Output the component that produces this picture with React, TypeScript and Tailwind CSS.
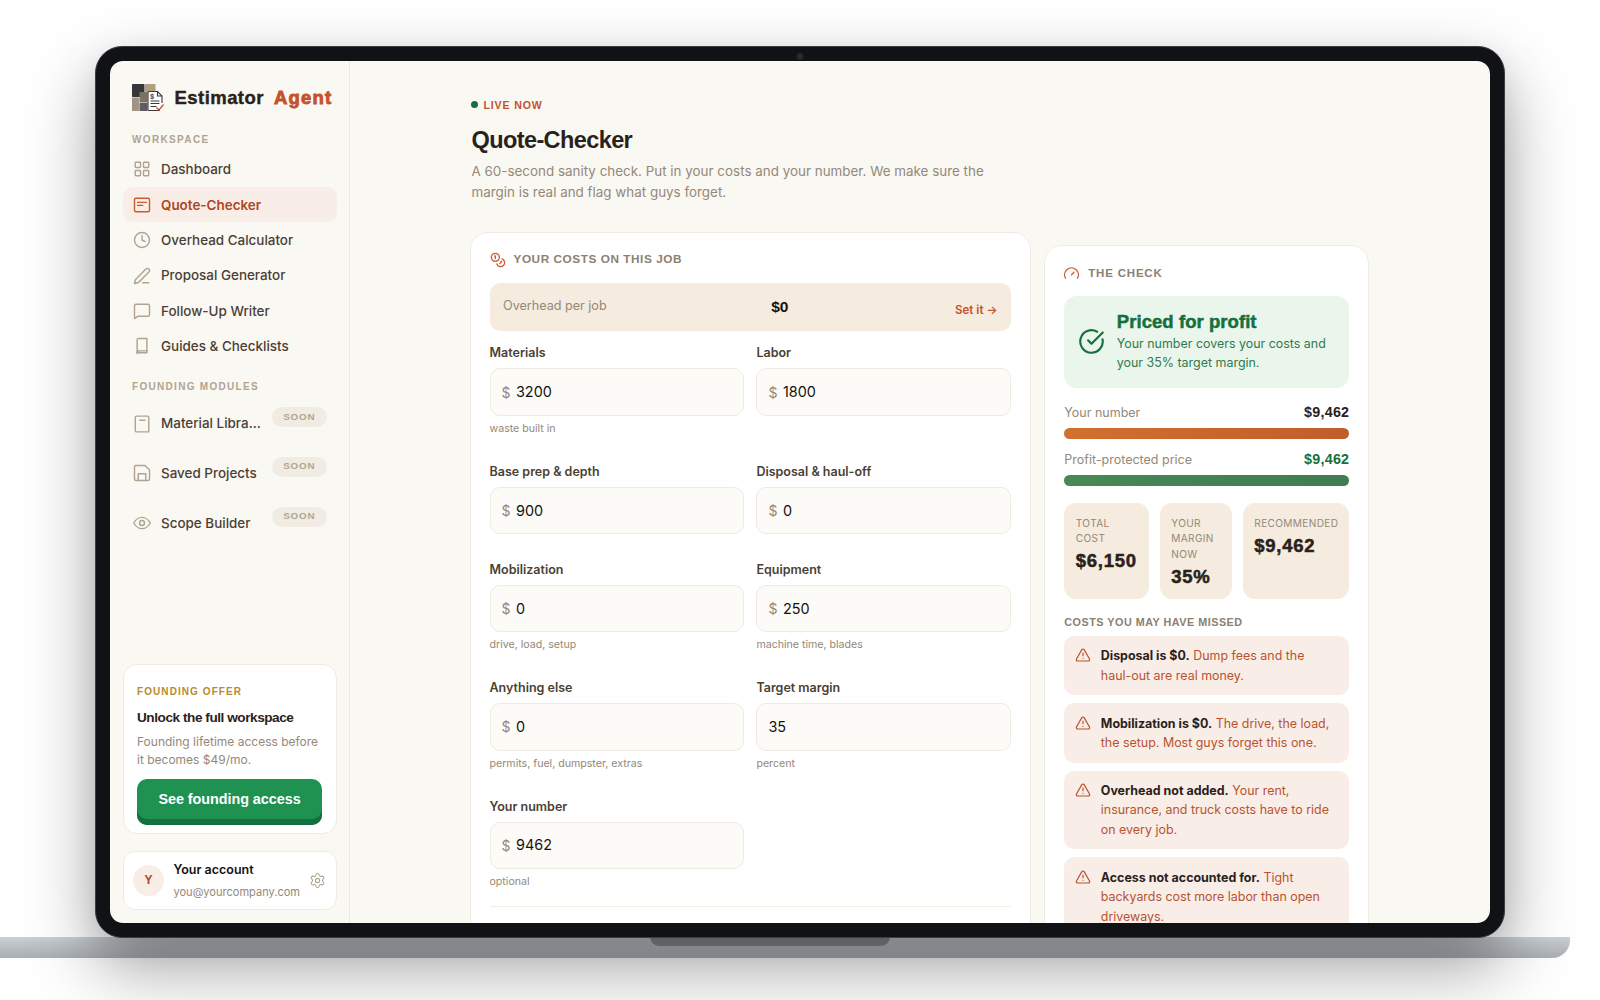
import {
  CircleCheckBig,
  Clock,
  Coins,
  LayoutGrid,
  MessageSquare,
  PenLine,
  Settings,
  TriangleAlert,
} from 'lucide-react';
import type { ReactNode } from 'react';

interface Field {
  label: string;
  value: string;
  hint?: string;
  plain?: boolean;
}

const iconProps = { size: 18, strokeWidth: 1.9 };

const workspace = [
  { label: 'Dashboard', icon: <LayoutGrid {...iconProps} /> },
  { label: 'Quote-Checker', icon: <QuoteIcon />, active: true },
  { label: 'Overhead Calculator', icon: <Clock {...iconProps} /> },
  { label: 'Proposal Generator', icon: <PenLine {...iconProps} /> },
  { label: 'Follow-Up Writer', icon: <MessageSquare {...iconProps} /> },
  { label: 'Guides & Checklists', icon: <GuideIcon /> },
];

const modules = [
  { label: 'Material Libra...', icon: <BookIcon /> },
  { label: 'Saved Projects', icon: <SaveIcon /> },
  { label: 'Scope Builder', icon: <EyeIcon /> },
];

const rows: Field[][] = [
  [{ label: 'Materials', value: '3200', hint: 'waste built in' }, { label: 'Labor', value: '1800' }],
  [{ label: 'Base prep & depth', value: '900' }, { label: 'Disposal & haul-off', value: '0' }],
  [
    { label: 'Mobilization', value: '0', hint: 'drive, load, setup' },
    { label: 'Equipment', value: '250', hint: 'machine time, blades' },
  ],
  [
    { label: 'Anything else', value: '0', hint: 'permits, fuel, dumpster, extras' },
    { label: 'Target margin', value: '35', hint: 'percent', plain: true },
  ],
  [{ label: 'Your number', value: '9462', hint: 'optional' }],
];

const missed = [
  { title: 'Disposal is $0.', text: 'Dump fees and the haul-out are real money.' },
  { title: 'Mobilization is $0.', text: 'The drive, the load, the setup. Most guys forget this one.' },
  { title: 'Overhead not added.', text: 'Your rent, insurance, and truck costs have to ride on every job.' },
  { title: 'Access not accounted for.', text: 'Tight backyards cost more labor than open driveways.' },
];

function Svg({ children }: { children: ReactNode }) {
  return (
    <svg width="18" height="18" viewBox="0 0 24 24" fill="none" stroke="currentColor" strokeWidth="1.9" strokeLinecap="round" strokeLinejoin="round">
      {children}
    </svg>
  );
}

function QuoteIcon() {
  return (
    <Svg>
      <rect x="2" y="3" width="20" height="18" rx="2" />
      <path d="M6 8.500h12M6 12.500h7" />
    </Svg>
  );
}

function GuideIcon() {
  return (
    <Svg>
      <path d="M5.500 22V4a2 2 0 0 1 2-2h11v16.500H6.500" />
      <path d="M5.500 20.500a2 2 0 0 1 2-2M5.500 21h13v-3" />
    </Svg>
  );
}

function BookIcon() {
  return (
    <Svg>
      <path d="M5 1.500h14.500a1.500 1.500 0 0 1 1.500 1.500v19.500H5a2 2 0 0 1-2-2v-17a2 2 0 0 1 2-2z" />
      <path d="M9 7h7" />
    </Svg>
  );
}

function SaveIcon() {
  return (
    <Svg>
      <path d="M4 2h12l6 6v12a2 2 0 0 1-2 2H4a2 2 0 0 1-2-2V4a2 2 0 0 1 2-2z" />
      <path d="M7 22v-9h10v9" />
    </Svg>
  );
}

function EyeIcon() {
  return (
    <Svg>
      <path d="M1 12s4-7.500 11-7.500S23 12 23 12s-4 7.500-11 7.500S1 12 1 12z" />
      <circle cx="12" cy="12" r="3.300" />
    </Svg>
  );
}

function Logo() {
  return (
    <svg width="32" height="28" viewBox="0 0 32 28" fill="none">
      <rect x="0" y="0" width="12.500" height="13" rx="0.800" fill="#35383a" />
      <rect x="13" y="0" width="10.500" height="8" rx="0.800" fill="#b39f80" />
      <rect x="0" y="13.500" width="7" height="13.500" rx="0.800" fill="#a09486" />
      <rect x="7.500" y="8" width="8" height="10.500" fill="#7b7166" />
      <rect x="7.500" y="19" width="8" height="8" fill="#5d5d5e" />
      <path d="M16 7.500h9.500l4.500 4.500V27H16z" fill="#fff" />
      <path d="M28 26.500H17a1 1 0 0 1-1-1v-17a1 1 0 0 1 1-1h8.500l4.500 4.500v7" stroke="#3a3a3a" strokeWidth="1.100" />
      <path d="M25.500 7.500v4.500H30M18.500 17h9M18.500 19.500h9M18.500 22.500h6" stroke="#3a3a3a" strokeWidth="1.100" />
      <text x="18" y="15" fontSize="6.500" fontWeight="700" fill="#3a3a3a" fontFamily="Inter">$</text>
      <path d="M24.500 23.500l2.500 2.500 4.500-5.500" stroke="#cf5330" strokeWidth="1.400" />
    </svg>
  );
}

function Sidebar() {
  return (
    <aside className="flex w-[239.500px] shrink-0 flex-col border-r border-[#eeeae0] pb-[13.500px] pl-[12.500px] pr-3 pt-[23px]">
      <div className="flex h-7 items-center pl-[9px]">
        <Logo />
        <div className="-mt-px ml-[11px] flex gap-[10px] whitespace-nowrap font-['Liberation_Sans',sans-serif] text-[18.500px] font-bold">
          <span className="w-[89.500px] tracking-[0.450px] text-[#2a211b] [-webkit-text-stroke:0.4px_#2a211b]">Estimator</span>
          <span className="tracking-[1.200px] text-[#c4532d] [-webkit-text-stroke:0.9px_#c4532d]">Agent</span>
        </div>
      </div>
      <p className="mt-[20px] pl-[9.500px] font-['Liberation_Sans',sans-serif] text-[10px] font-bold leading-[15px] tracking-[1.350px] text-[#b0a491]">WORKSPACE</p>
      <nav className="mt-[4.500px]">
        {workspace.map((item) => (
          <a
            key={item.label}
            className={`flex h-[35.450px] items-center gap-[10.500px] rounded-[10px] pl-[10px] text-[13.450px] font-medium ${
              item.active ? 'bg-[#f9ede8] font-semibold text-[#b1451f]' : 'text-[#4a3f35]'
            }`}
          >
            <span className={item.active ? 'text-[#cb5a36]' : 'text-[#b0a491]'}>{item.icon}</span>
            {item.label}
          </a>
        ))}
      </nav>
      <p className="mt-[14.500px] pl-[9.500px] font-['Liberation_Sans',sans-serif] text-[10px] font-bold leading-[15px] tracking-[1.300px] text-[#b0a491]">FOUNDING MODULES</p>
      <div className="mt-[5px]">
        {modules.map((item) => (
          <a key={item.label} className="flex h-[49.800px] items-center pl-[10px] text-[13.450px] font-medium text-[#4a3f35]">
            <span className="mr-[10.500px] text-[#b0a491]">{item.icon}</span>
            <span className="w-[102px] shrink-0 whitespace-nowrap">{item.label}</span>
            <span className="mb-[13px] ml-[9px] flex h-5 w-[54.500px] shrink-0 items-center justify-center rounded-full bg-[#f1ece3] font-['Liberation_Sans',sans-serif] text-[9.800px] font-bold tracking-[0.800px] text-[#b0a491]">
              SOON
            </span>
          </a>
        ))}
      </div>

      <div className="mt-auto h-[169.500px] rounded-[14px] border border-[#f0ebe0] bg-white px-[13.500px] pt-[19px]">
        <p className="font-['Liberation_Sans',sans-serif] text-[10px] font-bold leading-[15px] tracking-[1.080px] text-[#b98a2e]">FOUNDING OFFER</p>
        <h3 className="mt-[10px] whitespace-nowrap font-['Liberation_Sans',sans-serif] text-[13.600px] font-bold leading-[18px] tracking-[-0.450px] text-[#2a211b]">
          Unlock the full workspace
        </h3>
        <p className="mt-[6px] whitespace-nowrap text-[12px] leading-[18.200px] text-[#948878]">
          Founding lifetime access before
          <br />
          it becomes $49/mo.
        </p>
        <button className="mt-[10px] h-[46px] w-full rounded-[10px] bg-[#1f9151] pb-[6px] font-['Liberation_Sans',sans-serif] text-[14.400px] font-bold tracking-[-0.050px] text-white shadow-[inset_0_-6px_0_#14703c]">
          See founding access
        </button>
      </div>

      <div className="mt-[17.500px] flex h-[58.500px] items-center rounded-[12px] border border-[#f0ebe0] bg-white px-[9.500px]">
        <span className="flex h-[31px] w-[31px] shrink-0 items-center justify-center rounded-full bg-[#f9ede8] font-['Liberation_Sans',sans-serif] text-[12px] font-bold text-[#b1451f]">Y</span>
        <div className="ml-[9.500px] mt-px flex-1">
          <p className="text-[12.500px] font-semibold leading-[22px] text-[#16120f]">Your account</p>
          <p className="text-[11.050px] leading-[22px] text-[#948878]">you@yourcompany.com</p>
        </div>
        <Settings size={17} strokeWidth={1.5} className="text-[#b0a491]" />
      </div>
    </aside>
  );
}

function FieldInput({ field }: { field: Field }) {
  return (
    <div>
      <label className="block text-[12.500px] font-semibold leading-[18px] text-[#4a3f35]">{field.label}</label>
      <div className="mt-[6px] flex h-[47.300px] items-center rounded-[10px] border border-[#f0ebe0] bg-[#fcfbf7] px-[11px] text-[14.400px]">
        {!field.plain && <span className="mr-[5.500px] text-[14px] text-[#948878]">$</span>}
        <span className="text-[#16120f]">{field.value}</span>
      </div>
      {field.hint && <p className="mt-[5px] text-[10.620px] leading-[15px] text-[#948878]">{field.hint}</p>}
    </div>
  );
}

function CostsCard() {
  return (
    <section className="h-[760px] w-[561.500px] shrink-0 rounded-[18px] border border-[#f0ebe0] bg-white px-[19px] pt-[18px]">
      <div className="flex h-[18px] items-center gap-2">
        <Coins size={16} strokeWidth={2} className="text-[#cb5a36]" />
        <h2 className="pt-px font-['Liberation_Sans',sans-serif] text-[11.800px] font-bold tracking-[0.540px] text-[#8c8070]">YOUR COSTS ON THIS JOB</h2>
      </div>
      <div className="mt-[14px] flex h-[48px] items-center justify-between rounded-[10px] bg-[#f5ecdf] px-[13.500px]">
        <span className="text-[12.600px] text-[#948878]">Overhead per job</span>
        <span className="pr-[2px] font-['Liberation_Sans',sans-serif] text-[15.500px] font-bold text-[#16120f]">$0</span>
        <a className="pt-[8px] text-[11.600px] font-semibold text-[#c4532d]">Set it →</a>
      </div>
      <div className="mt-[13.700px]">
        {rows.map((row) => (
          <div
            key={row[0].label}
            className={`grid grid-cols-2 gap-[12.300px] ${row.some((f) => f.hint) ? 'h-[118.300px]' : 'h-[98.300px]'}`}
          >
            {row.map((field) => (
              <FieldInput key={field.label} field={field} />
            ))}
          </div>
        ))}
      </div>
      <hr className="-mt-[10px] border-[#f3ede4]" />
    </section>
  );
}

function PriceBar({ label, tone }: { label: string; tone: 'orange' | 'green' }) {
  return (
    <div className="h-[47px]">
      <div className="flex h-[20px] items-center justify-between">
        <span className="text-[12.500px] text-[#948878]">{label}</span>
        <span
          className={`font-['Liberation_Sans',sans-serif] text-[14.300px] font-bold tracking-[0.250px] ${tone === 'green' ? 'text-[#14703c]' : 'text-[#2a211b]'}`}
        >
          $9,462
        </span>
      </div>
      <div
        className={`mt-[5px] h-[11px] rounded-full ${
          tone === 'green' ? 'bg-linear-to-r from-[#478957] to-[#407c4f]' : 'bg-linear-to-r from-[#d2702f] to-[#c15d2b]'
        }`}
      />
    </div>
  );
}

function Stat({ label, value, className }: { label: string; value: string; className: string }) {
  return (
    <div className={`rounded-[12px] bg-[#f5ecdf] pl-[11.500px] pt-[12.500px] ${className}`}>
      <p className="whitespace-pre-line text-[10.100px] leading-[15.600px] tracking-[0.350px] text-[#948878]">{label}</p>
      <p className="mt-[2.500px] font-['Liberation_Sans',sans-serif] text-[18.500px] font-bold leading-[24px] tracking-[0.750px] text-[#2a211b] [-webkit-text-stroke:0.5px_#2a211b]">
        {value}
      </p>
    </div>
  );
}

function CheckCard() {
  return (
    <section className="mt-[13px] h-[760px] w-[325px] shrink-0 rounded-[18px] border border-[#f0ebe0] bg-white px-[19px] pt-[18.500px]">
      <div className="flex h-[18px] items-center gap-[9px]">
        <svg width="15" height="15" viewBox="0 0 24 24" fill="none" stroke="#cb5a36" strokeWidth="2" strokeLinecap="round" strokeLinejoin="round">
          <path d="M12 14l4-4" />
          <path d="M2.500 19.500a11 11 0 1 1 19 0" />
        </svg>
        <h2 className="font-['Liberation_Sans',sans-serif] text-[11.500px] font-bold tracking-[0.800px] text-[#8c8070]">THE CHECK</h2>
      </div>

      <div className="mt-[13.500px] flex h-[92px] items-center rounded-[13px] bg-[#eaf5ec] pl-[14px]">
        <CircleCheckBig size={27} strokeWidth={1.900} className="shrink-0 text-[#14703c]" />
        <div className="ml-[11.500px] whitespace-nowrap">
          <p className="font-['Liberation_Sans',sans-serif] text-[18.500px] font-bold leading-[22px] tracking-[0.060px] text-[#14703c] [-webkit-text-stroke:0.5px_#14703c]">
            Priced for profit
          </p>
          <p className="mt-px text-[12.450px] leading-[19.500px] text-[#2f7a4e]">
            Your number covers your costs and
            <br />
            your 35% target margin.
          </p>
        </div>
      </div>

      <div className="mt-[15.500px]">
        <PriceBar label="Your number" tone="orange" />
        <PriceBar label="Profit-protected price" tone="green" />
      </div>

      <div className="mt-[6px] flex h-[95.500px] gap-[11px]">
        <Stat label={'TOTAL\nCOST'} value="$6,150" className="w-[84.500px]" />
        <Stat label={'YOUR\nMARGIN\nNOW'} value="35%" className="w-[72px]" />
        <Stat label="RECOMMENDED" value="$9,462" className="flex-1" />
      </div>

      <h3 className="mt-[15.500px] font-['Liberation_Sans',sans-serif] text-[10.800px] font-bold leading-[16px] tracking-[0.500px] text-[#8c8070]">
        COSTS YOU MAY HAVE MISSED
      </h3>
      <ul className="mt-[6px] space-y-[8px]">
        {missed.map((item) => (
          <li key={item.title} className="flex gap-[9.500px] rounded-[10px] bg-[#f9ede8] py-[10.200px] pl-[11px] pr-[16px]">
            <TriangleAlert size={16} strokeWidth={1.8} className="mt-px shrink-0 text-[#b8532f]" />
            <p className="text-[12.450px] leading-[19.450px] text-[#b8532f]">
              <b className="font-bold text-[#2a211b]">{item.title}</b> {item.text}
            </p>
          </li>
        ))}
      </ul>
    </section>
  );
}

export default function App() {
  return (
    <div className="flex h-[1000px] w-[1600px] flex-col items-center overflow-hidden bg-white pt-[46px] font-[Inter,sans-serif]">
      <div className="relative z-10 h-[892px] w-[1410px] shrink-0 rounded-[27px] border border-[#3c3e42] bg-[#101215] p-[14px] shadow-[0_30px_70px_rgba(0,0,0,0.360),0_10px_30px_rgba(0,0,0,0.080)]">
        <span className="absolute left-1/2 top-[6px] h-[7px] w-[7px] -translate-x-1/2 rounded-full bg-[#26292e]" />
        <div className="flex h-[862px] overflow-hidden rounded-[13px] bg-[#faf8f3]">
          <Sidebar />
          <main className="flex-1 pl-[120px] pt-[35.500px]">
            <div className="flex items-center gap-[5.500px] pl-[1.500px]">
              <span className="h-[7px] w-[7px] rounded-full bg-[#14703c]" />
              <span className="font-['Liberation_Sans',sans-serif] text-[10.600px] font-bold leading-[16px] tracking-[0.850px] text-[#c4532d]">LIVE NOW</span>
            </div>
            <h1 className="mt-[12px] pl-[2px] font-['Liberation_Sans',sans-serif] text-[23.500px] font-bold leading-[30px] tracking-[-0.600px] text-[#2a211b]">
              Quote-Checker
            </h1>
            <p className="mt-[6.500px] pl-[2px] text-[13.420px] leading-[20.600px] text-[#948878]">
              A 60-second sanity check. Put in your costs and your number. We make sure the
              <br />
              margin is real and flag what guys forget.
            </p>
            <div className="mt-[29.500px] flex items-start gap-[13.300px]">
              <CostsCard />
              <CheckCard />
            </div>
          </main>
        </div>
      </div>
      {/* laptop base, sits under the lid's shadow */}
      <div className="-mt-px flex h-[21px] w-[1660px] shrink-0 -translate-x-[60px] rounded-b-[18px] bg-linear-to-b from-[#cbd0d4] to-[#a9adb5] pl-[740px]">
        <span className="h-[9px] w-[240px] rounded-b-[9px] bg-[#8b8f94]" />
      </div>
    </div>
  );
}
